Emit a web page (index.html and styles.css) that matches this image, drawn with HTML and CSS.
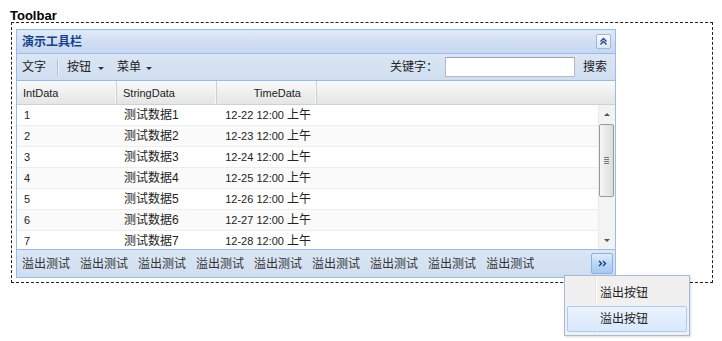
FILE: index.html
```html
<!DOCTYPE html>
<html lang="zh">
<head>
    <meta charset="UTF-8">
    <meta name="viewport" content="width=device-width, initial-scale=1.0">
    <title>Toolbar</title>
    <link rel="stylesheet" href="styles.css">
</head>
<body>
<div class="page">
    <div class="caption">Toolbar</div>
    <div class="demo-box">
        <div class="panel">
            <div class="panel-header">
                <span class="panel-title">演示工具栏</span>
                <span class="tool-collapse">
                    <svg width="9" height="9" viewBox="0 0 9 9">
                        <path d="M1.5 4.5 L4.5 1.5 L7.5 4.5 M1.5 7.5 L4.5 4.5 L7.5 7.5" fill="none" stroke="#15428b" stroke-width="1.3"/>
                    </svg>
                </span>
            </div>
            <div class="tbar">
                <span class="tb-text">文字</span>
                <span class="tb-sep"></span>
                <span class="tb-btn">按钮<i class="caret"></i></span>
                <span class="tb-btn menu-btn">菜单<i class="caret"></i></span>
                <div class="tb-right">
                    <span>关键字：</span>
                    <input type="text" class="tb-input">
                    <span>搜索</span>
                </div>
            </div>
            <div class="grid">
                <div class="grid-head">
                    <div class="hd">IntData</div>
                    <div class="hd">StringData</div>
                    <div class="hd hd-right">TimeData</div>
                    <div class="hd hd-fill"></div>
                </div>
                <div class="grid-body">
                    <div class="rows">
                        <div class="row"><span class="c-int">1</span><span class="c-str">测试数据1</span><span class="c-time">12-22 12:00 <b>上午</b></span></div>
                        <div class="row alt"><span class="c-int">2</span><span class="c-str">测试数据2</span><span class="c-time">12-23 12:00 <b>上午</b></span></div>
                        <div class="row"><span class="c-int">3</span><span class="c-str">测试数据3</span><span class="c-time">12-24 12:00 <b>上午</b></span></div>
                        <div class="row alt"><span class="c-int">4</span><span class="c-str">测试数据4</span><span class="c-time">12-25 12:00 <b>上午</b></span></div>
                        <div class="row"><span class="c-int">5</span><span class="c-str">测试数据5</span><span class="c-time">12-26 12:00 <b>上午</b></span></div>
                        <div class="row alt"><span class="c-int">6</span><span class="c-str">测试数据6</span><span class="c-time">12-27 12:00 <b>上午</b></span></div>
                        <div class="row"><span class="c-int">7</span><span class="c-str">测试数据7</span><span class="c-time">12-28 12:00 <b>上午</b></span></div>
                    </div>
                    <div class="vscroll">
                        <i class="arrow-up"></i>
                        <div class="thumb"><span class="grip"></span></div>
                        <i class="arrow-down"></i>
                    </div>
                </div>
            </div>
            <div class="bbar">
                <span class="bb-item">溢出测试</span>
                <span class="bb-item">溢出测试</span>
                <span class="bb-item">溢出测试</span>
                <span class="bb-item">溢出测试</span>
                <span class="bb-item">溢出测试</span>
                <span class="bb-item">溢出测试</span>
                <span class="bb-item">溢出测试</span>
                <span class="bb-item">溢出测试</span>
                <span class="bb-item">溢出测试</span>
                <span class="more-btn">
                    <svg width="9" height="7" viewBox="0 0 9 7">
                        <path d="M1 1 L3.5 3.5 L1 6 M5 1 L7.5 3.5 L5 6" fill="none" stroke="#15428b" stroke-width="1.4"/>
                    </svg>
                </span>
            </div>
        </div>
    </div>

    <div class="overflow-menu">
        <div class="menu-item">溢出按钮</div>
        <div class="menu-item active">溢出按钮</div>
    </div>
</div>
</body>
</html>
```

FILE: styles.css
```css
body {
    margin: 0;
    font-family: "Liberation Sans", "Noto Sans CJK SC", sans-serif;
    font-size: 12px;
    color: #222;
}

.page {
    position: relative;
    height: 341px;
    box-sizing: border-box;
    padding: 9px 0 0 10px;
}

.caption {
    font-size: 13px;
    font-weight: bold;
    line-height: 14px;
    color: #000;
}

.demo-box {
    margin: -1px 0 0 1px;
    width: 702px;
    height: 261px;
    box-sizing: border-box;
    border: 1px dashed #222;
    padding: 6px 4px 5px 4px;
}

.panel {
    width: 600px;
    box-sizing: border-box;
    border: 1px solid #99bbe8;
}

/* header */
.panel-header {
    height: 23px;
    border-bottom: 1px solid #99bbe8;
    background: linear-gradient(#e0eaf7, #d0def2 55%, #c6d8f0);
    display: flex;
    align-items: center;
    padding: 0 4px 0 5px;
}

.panel-title {
    font-weight: bold;
    color: #15428b;
    line-height: 16px;
}

.tool-collapse {
    margin-left: auto;
    width: 13px;
    height: 13px;
    border: 1px solid #9fb8da;
    border-radius: 2px;
    background: linear-gradient(#fbfdff, #dce7f6);
    display: flex;
    align-items: center;
    justify-content: center;
}

/* top toolbar */
.tbar {
    height: 26px;
    border-bottom: 1px solid #99bbe8;
    background: linear-gradient(#dbe6f4, #d0def0);
    display: flex;
    align-items: center;
    padding: 0 8px 0 5px;
    line-height: 18px;
}

.tb-sep {
    width: 1px;
    height: 16px;
    background: #a8c0e0;
    border-right: 1px solid #eef3fa;
    margin: 0 8px 0 11px;
}

.tb-btn {
    display: flex;
    align-items: center;
}

.menu-btn {
    margin-left: 13px;
}

.caret {
    width: 0;
    height: 0;
    border-left: 3px solid transparent;
    border-right: 3px solid transparent;
    border-top: 3px solid #333;
    margin-left: 7px;
    margin-top: 2px;
}

.menu-btn .caret {
    margin-left: 5px;
}

.tb-right {
    margin-left: auto;
    display: flex;
    align-items: center;
}

.tb-input {
    width: 130px;
    height: 20px;
    box-sizing: border-box;
    margin: 0 8px 0 7px;
    border: 1px solid #b5b8c8;
    border-top-color: #9da2b3;
    background: #fff;
    padding: 0 3px;
}

/* grid */
.grid-head {
    display: flex;
    height: 23px;
    border-bottom: 1px solid #d0d0d0;
    background: linear-gradient(#fafafa, #ededed 60%, #e4e5e7);
}

.hd {
    width: 100px;
    box-sizing: border-box;
    padding-left: 6px;
    border-right: 1px solid #d0d0d0;
    box-shadow: inset -1px 0 0 #f7f7f7;
    font-size: 11px;
    line-height: 24px;
    color: #222;
}

.hd-right {
    text-align: right;
    padding-right: 15px;
}

.hd-fill {
    flex: 1;
    border-right: none;
    box-shadow: none;
}

.grid-body {
    height: 144px;
    display: flex;
    overflow: hidden;
    background: #fff;
}

.rows {
    flex: 1;
}

.row {
    display: flex;
    height: 20px;
    border-bottom: 1px solid #ededed;
    line-height: 21px;
}

.row.alt {
    background: #fafafa;
}

.c-int,
.c-str,
.c-time {
    width: 100px;
    box-sizing: border-box;
}

.c-int {
    padding-left: 7px;
    font-size: 11px;
}

.c-str {
    padding-left: 7px;
}

.c-time {
    font-size: 11px;
    text-align: right;
    padding-right: 6px;
}

.c-time b {
    font-weight: normal;
    font-size: 12px;
}

.vscroll {
    width: 17px;
    box-sizing: border-box;
    background: #f3f3f3;
    border-left: 1px solid #eaeaea;
    position: relative;
}

.arrow-up,
.arrow-down {
    position: absolute;
    left: 5px;
    width: 0;
    height: 0;
    border-left: 3px solid transparent;
    border-right: 3px solid transparent;
}

.arrow-up {
    top: 8px;
    border-bottom: 3px solid #555;
}

.arrow-down {
    bottom: 7px;
    border-top: 3px solid #555;
}

.thumb {
    position: absolute;
    top: 19px;
    left: 0;
    width: 15px;
    height: 73px;
    box-sizing: border-box;
    border: 1px solid #9a9a9a;
    border-radius: 2px;
    background: linear-gradient(to right, #f6f6f6, #dcdcdc);
    display: flex;
    align-items: center;
    justify-content: center;
}

.grip {
    width: 5px;
    height: 7px;
    background: repeating-linear-gradient(#777 0, #777 1px, transparent 1px, transparent 2px);
}

/* bottom toolbar */
.bbar {
    height: 27px;
    border-top: 1px solid #99bbe8;
    background: linear-gradient(#dbe6f4, #d0def0);
    display: flex;
    align-items: center;
    padding: 0 2px 0 5px;
    line-height: 18px;
    color: #333;
}

.bb-item {
    flex: none;
    margin-right: 10px;
}

.more-btn {
    flex: none;
    margin-left: auto;
    width: 22px;
    height: 21px;
    box-sizing: border-box;
    border: 1px solid #8bb0e2;
    border-radius: 2px;
    background: linear-gradient(#dfecfc, #bcd6f6 50%, #a9c9f2);
    display: flex;
    align-items: center;
    justify-content: center;
}

/* overflow menu */
.overflow-menu {
    position: absolute;
    left: 564px;
    top: 275px;
    width: 126px;
    height: 61px;
    box-sizing: border-box;
    padding: 4px 2px 2px 2px;
    border: 1px solid #a7b9d4;
    background: linear-gradient(to right, #f0f0f0 30px, #e2e3e3 30px, #e2e3e3 31px, #fff 31px, #fff 32px, #f0f0f0 32px);
    box-shadow: 1px 1px 2px rgba(0, 0, 0, 0.15);
}

.menu-item {
    height: 26px;
    box-sizing: border-box;
    padding-left: 33px;
    line-height: 26px;
    color: #222;
}

.menu-item.active {
    border: 1px solid #aaccf6;
    border-radius: 2px;
    background: linear-gradient(#ebf3fd, #d9e8fb);
    padding-left: 32px;
    line-height: 24px;
}
```
